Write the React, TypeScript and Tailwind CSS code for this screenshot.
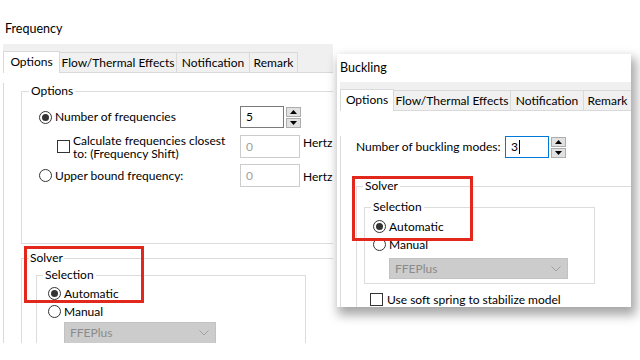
import React from "react";

const F = { fontFamily: 'Lato, "Noto Sans", sans-serif' };

function Radio({ on }: { on?: boolean }) {
  return (
    <span className="w-[13px] h-[13px] rounded-full border border-[#333333] bg-white flex items-center justify-center shrink-0">
      {on && <span className="w-[7px] h-[7px] rounded-full bg-[#333333]" />}
    </span>
  );
}

function Check() {
  return <span className="w-[13px] h-[13px] border border-[#333333] bg-white shrink-0" />;
}

function Spinner() {
  return (
    <div className="flex flex-col gap-[1px] ml-[2px] w-[15px]">
      <div className="h-[10px] bg-[#e1e1e1] border border-[#adadad] flex items-center justify-center">
        <svg width="7" height="4" viewBox="0 0 7 4"><polygon points="0,4 7,4 3.5,0" fill="#000" /></svg>
      </div>
      <div className="h-[10px] bg-[#e1e1e1] border border-[#adadad] flex items-center justify-center">
        <svg width="7" height="4" viewBox="0 0 7 4"><polygon points="0,0 7,0 3.5,4" fill="#000" /></svg>
      </div>
    </div>
  );
}

function Combo({ w, h }: { w: number; h: number }) {
  return (
    <div
      className="bg-[#cccccc] border border-[#c2c2c2] flex items-center justify-between pl-[5px] pr-[6px] text-[#8a8a8a]"
      style={{ width: w, height: h }}
    >
      <span>FFEPlus</span>
      <svg width="10" height="6" viewBox="0 0 10 6">
        <polyline points="0.5,0.5 5,5 9.5,0.5" fill="none" stroke="#a0a0a0" strokeWidth="1" />
      </svg>
    </div>
  );
}

function Tabs({ selW }: { selW: number }) {
  return (
    <div className="ml-[3px] h-[29px] bg-[#f0f0f0] border-b border-[#d9d9d9] flex items-end whitespace-nowrap">
      <div
        className="h-[22px] -mb-px bg-white border border-b-0 border-[#d9d9d9] flex items-center justify-center pb-[2px] shrink-0"
        style={{ width: selW }}
      >
        Options
      </div>
      <div className="h-[20px] w-[117px] border border-l-0 border-b-0 border-[#d9d9d9] flex items-center justify-center shrink-0">
        Flow/Thermal Effects
      </div>
      <div className="h-[20px] w-[73px] border border-l-0 border-b-0 border-[#d9d9d9] flex items-center justify-center shrink-0">
        Notification
      </div>
      <div className="h-[20px] w-[48px] border border-l-0 border-b-0 border-[#d9d9d9] flex items-center justify-center shrink-0">
        Remark
      </div>
    </div>
  );
}

export default function App() {
  return (
    <div className="relative w-[640px] h-[360px] bg-white overflow-hidden text-[12px] leading-[16px] text-black whitespace-nowrap" style={F}>
      {/* Frequency window */}
      <div className="absolute left-0 top-0 w-[333px] h-[343px] overflow-hidden bg-white">
        <div className="h-[44px] pl-[5px] pt-[21px] text-[12.5px]">Frequency</div>
        <Tabs selW={57} />
        <div className="ml-[3px] border-l border-[#d9d9d9] h-[271px]">
          <fieldset className="ml-[17px] mt-[10px] w-[360px] h-[161px] border border-[#dcdcdc]">
            <legend className="ml-[7px] px-[2px]">Options</legend>
            <div className="mt-[7px] flex items-center h-[22px]">
              <div className="w-[218px] pl-[17px] flex items-center gap-[3px]">
                <Radio on />
                <span>Number of frequencies</span>
              </div>
              <div className="w-[44px] h-[22px] border border-[#7a7a7a] pl-[5px] flex items-center">5</div>
              <Spinner />
            </div>
            <div className="mt-[7px] flex items-start h-[23px]">
              <div className="w-[218px] h-[23px] pl-[35px] flex items-center gap-[3px]">
                <Check />
                <span className="leading-[13px]">
                  Calculate frequencies closest
                  <br />
                  to: (Frequency Shift)
                </span>
              </div>
              <div className="w-[60px] h-[23px] border border-[#cccccc] pl-[5px] flex items-center text-[#a0a0a0]">0</div>
              <span className="ml-[3px]">Hertz</span>
            </div>
            <div className="mt-[6px] flex items-center h-[23px]">
              <div className="w-[218px] pl-[17px] flex items-center gap-[3px]">
                <Radio />
                <span>Upper bound frequency:</span>
              </div>
              <div className="w-[60px] h-[23px] border border-[#cccccc] pl-[5px] flex items-center text-[#a0a0a0]">0</div>
              <span className="ml-[3px] mt-[3px]">Hertz</span>
            </div>
          </fieldset>
          <fieldset className="ml-[17px] mt-[6px] w-[360px] h-[120px] border border-[#dcdcdc]">
            <legend className="ml-[7px] px-[1px]">Solver</legend>
            <fieldset className="ml-[14px] mt-[1px] w-[270px] h-[100px] border border-[#dcdcdc]">
              <legend className="ml-[6px] px-[2px]">Selection</legend>
              <div className="mt-[2px] h-[17px] pl-[11px] flex items-center gap-[3px]">
                <Radio on />
                <span>Automatic</span>
              </div>
              <div className="mt-[1px] h-[17px] pl-[11px] flex items-center gap-[3px]">
                <Radio />
                <span>Manual</span>
              </div>
              <div className="mt-[2px] pl-[27px]">
                <Combo w={152} h={22} />
              </div>
            </fieldset>
          </fieldset>
        </div>
      </div>

      {/* Buckling window */}
      <div className="absolute left-[337px] top-[54px] w-[294px] h-[253px] bg-white overflow-hidden shadow-[3px_6px_10px_2px_rgba(0,0,0,0.35)]">
        <div className="h-[28px] pl-[3px] flex items-center text-[12.5px]">Buckling</div>
        <Tabs selW={54} />
        <div className="ml-[3px] border-l border-[#d9d9d9] h-[200px]">
          <div className="mt-[25px] flex items-center h-[22px]">
            <div className="w-[164px] pl-[15px]">Number of buckling modes:</div>
            <div className="w-[44px] h-[22px] border border-[#0078d7] pl-[5px] flex items-center">
              <span>3</span>
              <span className="w-px h-[14px] bg-black ml-[1px]" />
            </div>
            <Spinner />
          </div>
          <fieldset className="ml-[15px] mt-[20px] w-[300px] h-[150px] border border-[#dcdcdc]">
            <legend className="ml-[6px] px-[2px]">Solver</legend>
            <fieldset className="ml-[7px] mt-[5px] w-[231px] h-[85px] border border-[#dcdcdc]">
              <legend className="ml-[6px] px-[2px]">Selection</legend>
              <div className="mt-[3px] h-[17px] pl-[8px] flex items-center gap-[3px]">
                <Radio on />
                <span>Automatic</span>
              </div>
              <div className="mt-[1px] h-[17px] pl-[8px] flex items-center gap-[3px]">
                <Radio />
                <span>Manual</span>
              </div>
              <div className="mt-[5px] pl-[24px]">
                <Combo w={179} h={21} />
              </div>
            </fieldset>
            <div className="mt-[7px] h-[17px] pl-[13px] flex items-center gap-[4px]">
              <Check />
              <span>Use soft spring to stabilize model</span>
            </div>
          </fieldset>
        </div>
      </div>

      {/* annotations */}
      <div className="absolute left-[24px] top-[246px] w-[120px] h-[57px] border-[3px] border-[#e2271d]" />
      <div className="absolute left-[352px] top-[176px] w-[121px] h-[65px] border-[3px] border-[#e2271d]" />
    </div>
  );
}
